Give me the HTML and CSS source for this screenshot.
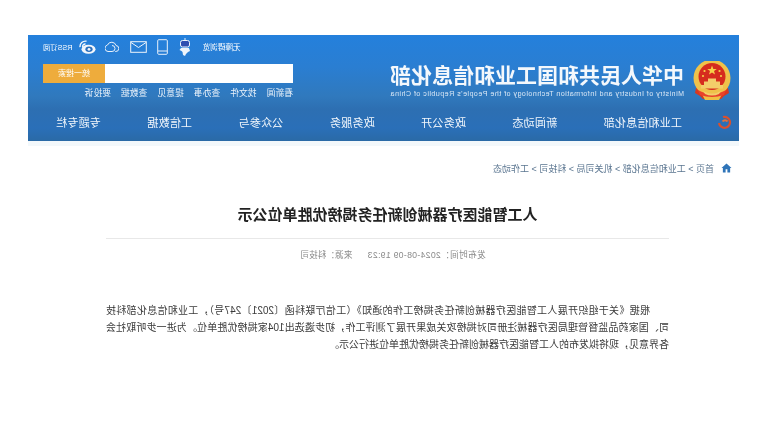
FILE: index.html
```html
<!DOCTYPE html>
<html lang="zh-CN">
<head>
    <meta charset="UTF-8">
    <title>人工智能医疗器械创新任务揭榜优胜单位公示</title>
    <link rel="stylesheet" href="styles.css">
</head>
<body>
    <div class="page">
        <div class="banner">
            <div class="banner-top">
                <div class="brand">
                    <svg class="emblem" viewBox="0 0 38 40">
                        <path d="M3 27l-1 5 5 3 3 3h18l3-3 5-3-1-5z" fill="#d8381f"/>
                        <path d="M9 33h20l-3 6H12z" fill="#efc045"/>
                        <circle cx="19" cy="17" r="18.500" fill="#efc24a"/>
                        <circle cx="19" cy="15.500" r="13.500" fill="#d62c1e"/>
                        <path d="M19 4.500l1.300 3.400h3.500l-2.800 2.200 1 3.400-3-2-3 2 1-3.400-2.800-2.200h3.500z" fill="#f6d24a"/>
                        <circle cx="11.500" cy="10" r="1.100" fill="#f6d24a"/>
                        <circle cx="26.500" cy="10" r="1.100" fill="#f6d24a"/>
                        <circle cx="10" cy="15" r="1.100" fill="#f6d24a"/>
                        <circle cx="28" cy="15" r="1.100" fill="#f6d24a"/>
                        <path d="M8 24h22v3.500H8zM11 20.500h16V24H11zM15 17.500h8v3h-8z" fill="#f3ce6a"/>
                        <path d="M5 29q14 8 28 0l-2 5q-12 4-24 0z" fill="#e8412b"/>
                        <path d="M10 30q9 5 18 0l-2 3q-7 3-14 0z" fill="#f3ce6a"/>
                    </svg>
                    <div class="brand-text">
                        <div class="brand-name">中华人民共和国工业和信息化部</div>
                        <div class="brand-en">Ministry of Industry and Information Technology of the People's Republic of China</div>
                    </div>
                </div>
                <div class="tools">
                    <div class="tool-row">
                        <span class="weather">无障碍浏览</span>
                        <svg class="robot" viewBox="0 0 12 18">
                            <path d="M6 0v3" stroke="#e8f0fa"/>
                            <rect x="1.500" y="2.500" width="9" height="6.500" rx="2" fill="#2f4fb0" stroke="#eef4fb"/>
                            <path d="M2 10h8l1.500 2-2 1-1 1-.5 3-2 1-1-2-2-2-2-1z" fill="#eef4fb"/>
                        </svg>
                        <svg class="tool-icon phone" viewBox="0 0 11 16">
                            <rect x=".7" y=".7" width="9.600" height="14.600" rx="1" fill="none" stroke="#e8f0fa"/>
                            <path d="M1 12h9" stroke="#e8f0fa"/>
                        </svg>
                        <svg class="tool-icon mail" viewBox="0 0 17 12">
                            <rect x=".7" y=".7" width="15.600" height="10.600" fill="none" stroke="#eef4fb"/>
                            <path d="M1 1.500l7.500 5 7.500-5" fill="none" stroke="#eef4fb"/>
                        </svg>
                        <svg class="tool-icon cloud" viewBox="0 0 14 13">
                            <path d="M4 11.500H3.500a3 3 0 0 1-.5-6A4.500 4.500 0 0 1 11.500 5a3.300 3.300 0 0 1-.5 6.500H7a3 3 0 0 1 0-6" fill="none" stroke="#e8f0fa"/>
                        </svg>
                        <svg class="tool-icon weibo" viewBox="0 0 17 14">
                            <ellipse cx="7.500" cy="9.300" rx="7" ry="4.500" fill="#f2f6fb"/>
                            <ellipse cx="7" cy="9.300" rx="3.600" ry="2.700" fill="#2a6fbd"/>
                            <circle cx="7" cy="9.300" r="1.400" fill="#f2f6fb"/>
                            <path d="M9.500 1.200a5.500 5.500 0 0 1 6.500 6M10.500 4a2.500 2.500 0 0 1 2.800 3" fill="none" stroke="#f2f6fb" stroke-width="1.400"/>
                        </svg>
                        <span class="rss">RSS订阅</span>
                    </div>
                    <div class="search">
                        <div class="search-input"></div>
                        <div class="search-btn">统一搜索</div>
                    </div>
                    <div class="quick-links">
                        <span>看新闻</span>
                        <span>找文件</span>
                        <span>查办事</span>
                        <span>提意见</span>
                        <span>查数据</span>
                        <span>要投诉</span>
                    </div>
                </div>
            </div>
            <div class="nav">
                <svg class="nav-home" viewBox="0 0 14 14">
                    <path d="M9 2a5.500 5.500 0 1 0 4 6" fill="none" stroke="#d9502e" stroke-width="2.200"/>
                    <path d="M4.500 6.500a3 3 0 0 1 5 0" fill="none" stroke="#e2703a" stroke-width="2"/>
                </svg>
                <a class="nav-link">工业和信息化部</a>
                <a class="nav-link">新闻动态</a>
                <a class="nav-link">政务公开</a>
                <a class="nav-link">政务服务</a>
                <a class="nav-link">公众参与</a>
                <a class="nav-link">工信数据</a>
                <a class="nav-link">专题专栏</a>
            </div>
        </div>
        <div class="banner-shade"></div>

        <div class="crumbs">
            <svg class="crumb-home" viewBox="0 0 12 11">
                <path d="M6 .5L.5 5.500H2V10.500h3V7h2v3.500h3V5.500h1.500z" fill="#2f74b8"/>
            </svg>
            <span>首页 &gt; 工业和信息化部 &gt; 机关司局 &gt; 科技司 &gt; 工作动态</span>
        </div>

        <div class="article">
            <h1>人工智能医疗器械创新任务揭榜优胜单位公示</h1>
            <div class="meta">
                <span class="meta-time">发布时间：2024-08-09 19:23</span>
                <span>来源：科技司</span>
            </div>
            <p>根据《关于组织开展人工智能医疗器械创新任务揭榜工作的通知》（工信厅联科函〔2021〕247号），工业和信息化部科技司、国家药品监督管理局医疗器械注册司对揭榜攻关成果开展了测评工作，初步遴选出104家揭榜优胜单位。为进一步听取社会各界意见，现将拟发布的人工智能医疗器械创新任务揭榜优胜单位进行公示。</p>
        </div>
    </div>
</body>
</html>
```

FILE: styles.css
```css
* {
    margin: 0;
    padding: 0;
    box-sizing: border-box;
    font-family: 'Liberation Sans', 'Noto Sans CJK SC', sans-serif;
}

html, body {
    height: 100%;
    overflow: hidden;
    background-color: #fff;
}

/* the whole shot is flipped and a little soft */
.page {
    width: 765px;
    height: 430px;
    padding: 35px 28px 0 26px;
    transform: scaleX(-1);
    filter: blur(0.55px);
}

/* Banner */
.banner {
    height: 106px;
    display: flex;
    flex-direction: column;
    background: linear-gradient(180deg, #2480dc 0%, #2a7ed2 30%, #3079bd 58%, #2d6fb2 70%, #2a6fb8 88%, #2a6aa6 100%);
    color: #fff;
}

.banner-shade {
    height: 5px;
    background-color: #f3f8fb;
}

.banner-top {
    height: 69px;
    display: flex;
    justify-content: space-between;
    padding: 0 0 0 8px;
}

.brand {
    display: flex;
    align-items: center;
    gap: 9px;
    padding-top: 23px;
}

.emblem {
    width: 38px;
    height: 40px;
}

.brand-name {
    font-size: 21px;
    font-weight: 700;
    line-height: 24px;
    white-space: nowrap;
    color: #f4f8fc;
}

.brand-en {
    font-size: 7px;
    line-height: 9px;
    margin-top: 1px;
    white-space: nowrap;
    color: #dce9f6;
    letter-spacing: 0.52px;
}

.tools {
    width: 250px;
    margin-right: 15px;
    padding-top: 4px;
    display: flex;
    flex-direction: column;
}

.tool-row {
    height: 15px;
    display: flex;
    align-items: center;
    justify-content: flex-end;
    font-size: 7.600px;
    white-space: nowrap;
}

.robot {
    width: 12px;
    height: 18px;
    margin-left: 12px;
}

.tool-icon {
    flex-shrink: 0;
}

.phone {
    width: 11px;
    height: 16px;
    margin-left: 11px;
}

.mail {
    width: 17px;
    height: 12px;
    margin-left: 10px;
}

.cloud {
    width: 14px;
    height: 13px;
    margin-left: 11px;
}

.weibo {
    width: 17px;
    height: 14px;
    margin-left: 9px;
}

.rss {
    margin-left: 6px;
    font-size: 7.300px;
}

.search {
    height: 19px;
    margin-top: 10px;
    display: flex;
}

.search-input {
    flex: 1;
    background-color: #fff;
}

.search-btn {
    width: 62px;
    background-color: #eeac3c;
    font-size: 8px;
    line-height: 19px;
    text-align: center;
}

.quick-links {
    margin-top: 5px;
    display: flex;
    gap: 10px;
    font-size: 8.800px;
    line-height: 10px;
    color: #eaf2fa;
}

/* Nav */
.nav {
    flex: 1;
    display: flex;
    align-items: center;
    padding: 0 0 2px 7px;
    font-size: 11.200px;
    color: #f2f7fc;
}

.nav-home {
    width: 14px;
    height: 14px;
    flex-shrink: 0;
    margin-right: 36px;
}

.nav-link {
    white-space: nowrap;
}

.nav-link + .nav-link {
    margin-left: 46.500px;
}

/* Breadcrumb */
.crumbs {
    margin-top: 14px;
    padding-left: 7px;
    display: flex;
    align-items: center;
    gap: 7px;
    height: 16px;
    font-size: 9px;
    color: #5a7590;
}

.crumb-home {
    width: 11px;
    height: 10px;
}

/* Article */
.article {
    width: 563px;
    margin-left: 70px;
}

.article h1 {
    margin-top: 28px;
    font-size: 15px;
    line-height: 22px;
    font-weight: 700;
    text-align: center;
    white-space: nowrap;
    color: #222;
}

.meta {
    margin-top: 12px;
    padding: 10px 11px 0 0;
    border-top: 1px solid #e8e8e8;
    display: flex;
    justify-content: center;
    gap: 15px;
    font-size: 8.700px;
    line-height: 12px;
    color: #8a8a8a;
}

.meta-time {
    letter-spacing: 0.3px;
}

.article p {
    margin-top: 41px;
    font-size: 10px;
    line-height: 17px;
    text-indent: 19px;
    text-align: justify;
    color: #3a3a3a;
}
```
